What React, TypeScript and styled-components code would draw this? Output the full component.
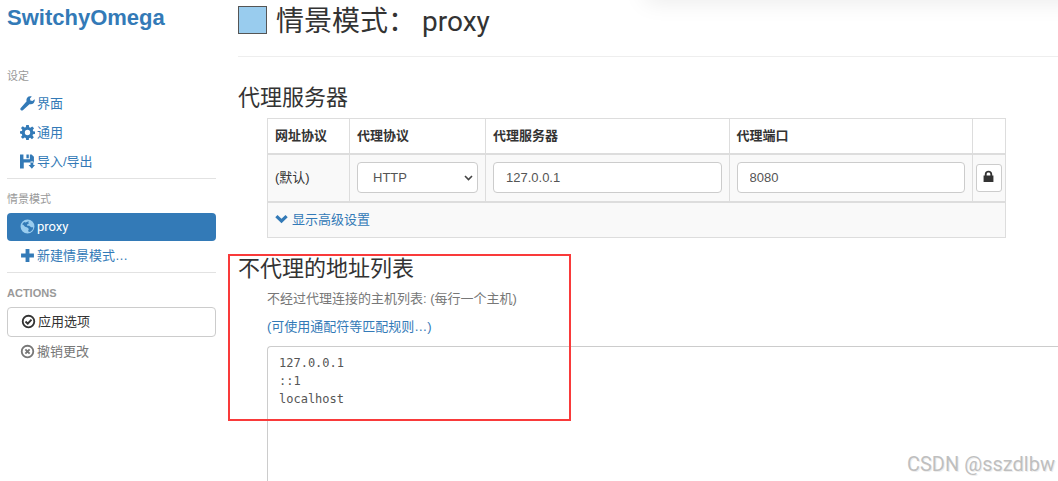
import React from "react";
import styled, { createGlobalStyle, css } from "styled-components";

const blue = "#337ab7";
const line = "#dddddd";

const GlobalStyle = createGlobalStyle`
  *, *::before, *::after { box-sizing: border-box; }
  body {
    margin: 0;
    background: #fff;
    color: #333;
    font: 13px/18px "Liberation Sans", "Noto Sans CJK SC", sans-serif;
  }
  a { color: ${blue}; text-decoration: none; }
  h1, h2, h3, p { margin: 0; font-weight: 400; }
  button, input, select, textarea { font: inherit; color: inherit; }
`;

const Page = styled.div`
  position: relative;
  display: grid;
  grid-template-columns: 209px minmax(0, 1fr);
  column-gap: 22px;
  height: 100vh;
  padding-left: 7px;
  overflow: hidden;
`;

const Sidebar = styled.nav`
  display: flex;
  flex-direction: column;
  padding-top: 4px;
`;

const Brand = styled.h1`
  margin-bottom: 36px;
  color: ${blue};
  font-size: 22px;
  font-weight: 700;
  line-height: 28px;
`;

const Group = styled.section`
  & + & {
    border-top: 1px solid #e2e2e2;
    margin-top: 1px;
    padding-top: 12px;
  }
`;

const GroupLabel = styled.h2<{ $bold?: boolean }>`
  margin-bottom: 6px;
  color: #999;
  font-size: 11px;
  font-weight: ${(p) => (p.$bold ? 700 : 400)};
  line-height: 16px;
`;

const itemBox = css`
  display: flex;
  align-items: center;
  gap: 2px;
  width: 100%;
  height: 28px;
  margin-bottom: 1px;
  padding: 0 14px 0 13px;
  border: 0;
  border-radius: 4px;
  background: none;
  text-align: left;
  svg { width: 15px; height: 15px; margin-bottom: 2px; }
`;

const NavItem = styled.a<{ $active?: boolean }>`
  ${itemBox}
  ${(p) =>
    p.$active &&
    css`
      background: ${blue};
      color: #fff;
      font-family: Roboto, "Noto Sans CJK SC", sans-serif;
      svg { color: #99ccee; }
    `}
`;

const ActionButton = styled.button<{ $outlined?: boolean }>`
  ${itemBox}
  color: ${(p) => (p.$outlined ? "#333" : "#777")};
  ${(p) =>
    p.$outlined &&
    css`
      height: 30px;
      border: 1px solid #ccc;
      background: #fff;
    `}
`;

const Icon = styled.svg`
  flex: none;
  width: 13px;
  height: 13px;
  fill: currentColor;
`;

const Main = styled.main`
  display: flex;
  flex-direction: column;
  min-width: 0;
`;

const Title = styled.header`
  display: flex;
  align-items: flex-start;
  gap: 9px;
  height: 57px;
  padding-top: 6px;
  border-bottom: 1px solid #eee;
  h2 {
    display: flex;
    gap: 6px;
    font: 400 28px/32px Roboto, "Noto Sans CJK SC", sans-serif;
  }
`;

const Swatch = styled.span`
  width: 29px;
  height: 28px;
  border: 1px solid #555;
  background: #99ccee;
`;

const SectionTitle = styled.h3`
  font-size: 22px;
  line-height: 30px;
`;

const ServerSection = styled.section`
  margin-bottom: 16px;
  padding-top: 26px;
`;

const Table = styled.table`
  width: calc(100% - 81px);
  margin: 5px 0 0 29px;
  border-collapse: collapse;
  table-layout: fixed;
  border: 1px solid ${line};
  th, td {
    padding: 0 7px;
    border: 1px solid ${line};
    text-align: left;
    vertical-align: middle;
  }
  th { height: 35px; border-bottom-width: 2px; font-weight: 700; }
  tbody td { height: 48px; background: #f9f9f9; }
  tfoot td { height: 36px; border-top-width: 2px; background: #f9f9f9; }
  td:last-child:not([colspan]) { padding: 0 3px; }
`;

const Col = styled.col<{ $w?: number }>`
  width: ${(p) => (p.$w ? `${p.$w}px` : "auto")};
`;

const field = css`
  display: block;
  width: 100%;
  height: 31px;
  padding: 0 12px;
  border: 1px solid #ccc;
  border-radius: 4px;
  background: #fff;
  color: #555;
  outline: 0;
`;

const TextField = styled.input`${field}`;

const SelectWrap = styled.div`
  display: grid;
  align-items: center;
  > * { grid-area: 1 / 1; }
  svg { justify-self: end; width: 9px; height: 9px; margin-right: 5px; pointer-events: none; }
`;

const Select = styled.select`
  ${field}
  padding-left: 15px;
  appearance: none;
`;

const LockButton = styled.button`
  display: flex;
  align-items: center;
  justify-content: center;
  width: 26px;
  height: 28px;
  padding: 0 2px 2px 0;
  border: 1px solid #ccc;
  border-radius: 3px;
  background: #fff;
`;

const MoreLink = styled.a`
  display: flex;
  align-items: center;
  gap: 4px;
`;

const BypassSection = styled.section`
  position: relative;
  display: flex;
  flex: 1;
  flex-direction: column;
`;

const Indented = styled.div`
  display: flex;
  flex: 1;
  flex-direction: column;
  padding: 6px 0 0 29px;
`;

const Help = styled.p`
  margin-bottom: 10px;
  color: #777;
`;

const HostList = styled.textarea`
  flex: 1;
  width: 100%;
  margin-top: 10px;
  padding: 7px 11px;
  border: solid #ccc;
  border-width: 1px 0 0 1px;
  border-radius: 4px 0 0 0;
  background: #fff;
  color: #555;
  font: 12px/18px "DejaVu Sans Mono", monospace;
  outline: 0;
  resize: none;
`;

const Highlight = styled.div`
  position: absolute;
  top: 0;
  left: -10px;
  width: 343px;
  height: 167px;
  border: 2px solid #f93a3a;
  pointer-events: none;
`;

const TopShade = styled.div`
  position: absolute;
  top: -20px;
  right: -20px;
  left: 646px;
  height: 20px;
  box-shadow: 0 0 24px rgba(0, 0, 0, 0.1);
`;

const Watermark = styled.span`
  position: absolute;
  right: 3px;
  bottom: 5px;
  color: #bfbfbf;
  font: 20px/24px Roboto, sans-serif;
  text-shadow: 1px 1px 0 #eee;
`;

const paths = {
  wrench:
    "M13.6 3 11.600 4.700 9.700 4.200 9.300 2.300 11 .5C9.400 0 7.800.3 6.900 1.300 6 2.300 5.800 3.600 6.200 4.900L.7 11.200a1.300 1.300 0 0 0 0 1.800l.2.2a1.300 1.300 0 0 0 1.800 0L8.800 7.600c1.400.4 2.800.1 3.800-.8 1-1 1.400-2.500 1-3.800Z",
  cog:
    "M5.800 0h2.400l.4 2 1.100.5L11.400 1.300l1.700 1.700-1.200 1.700.4 1.100 1.700.2v2.300l-1.900.4-.4 1.100 1.200 1.700-1.700 1.700-1.700-1.200-1.100.4L8.200 14H5.800l-.4-1.900-1.100-.4-1.700 1.200L.9 11.200l1.200-1.700-.4-1.100L0 8V5.800l1.800-.3.4-1.100L.9 2.900 2.600 1.200l1.700 1.200 1.100-.4ZM7 4.500a2.500 2.500 0 1 0 0 5 2.500 2.500 0 0 0 0-5Z",
  save:
    "M0 .5h3.200v4.500h6V.5h1.600L13 2.500v5.500H9V8H3.500v5.500H0ZM6 .5H8.200v3.500H6ZM9.800 7h2.600v3.300H14L11.100 13.800 8 10.300h1.800Z",
  plus: "M5.200 1h3.600v4.200H13v3.600H8.800V13H5.200V8.800H1V5.200h4.200Z",
  chevron: "M.3 4.500 2.700 2.100 7 6.300l4.300-4.200 2.400 2.400L7 11Z",
  lock:
    "M3 6V4.500C3 2.300 4.600.8 7 .8s4 1.500 4 3.700V6h1.300v7H1.700V6Zm2 0h4V4.500C9 3.300 8.200 2.600 7 2.600S5 3.300 5 4.500Z",
  globe:
    "M7 .5a6.500 6.500 0 1 0 0 13A6.500 6.500 0 0 0 7 .5ZM8.500 1.900 7.600 3.100l.9.800-1.700 1-.2 1.500 2-.2 1.800 1.400 1.700.2.2.8A5.300 5.300 0 0 1 8.200 12.200L7.600 10.800l.7-1.500-1.400-1.400-2.200-.6-1.700-2-1-.1A5.300 5.300 0 0 1 3.800 2.800l1.500.5Z",
};

const Glyph = ({ name }: { name: keyof typeof paths }) => (
  <Icon viewBox="0 0 14 14" aria-hidden="true">
    <path fillRule="evenodd" d={paths[name]} />
  </Icon>
);

const CircleGlyph = ({ mark }: { mark: string }) => (
  <Icon viewBox="0 0 14 14" aria-hidden="true">
    <circle cx="7" cy="7" r="5.400" fill="none" stroke="currentColor" strokeWidth="1.700" />
    <path d={mark} fill="none" stroke="currentColor" strokeWidth="1.800" />
  </Icon>
);

export default function App() {
  return (
    <>
      <GlobalStyle />
      <Page>
        <Sidebar>
          <Brand>SwitchyOmega</Brand>
          <Group>
            <GroupLabel>设定</GroupLabel>
            <NavItem href="#ui"><Glyph name="wrench" />界面</NavItem>
            <NavItem href="#general"><Glyph name="cog" />通用</NavItem>
            <NavItem href="#io"><Glyph name="save" />导入/导出</NavItem>
          </Group>
          <Group>
            <GroupLabel>情景模式</GroupLabel>
            <NavItem href="#proxy" $active><Glyph name="globe" />proxy</NavItem>
            <NavItem href="#new"><Glyph name="plus" />新建情景模式…</NavItem>
          </Group>
          <Group>
            <GroupLabel $bold>ACTIONS</GroupLabel>
            <ActionButton type="button" $outlined>
              <CircleGlyph mark="M4.200 7 6.300 9 9.800 5.300" />应用选项
            </ActionButton>
            <ActionButton type="button">
              <CircleGlyph mark="M5 5l4 4M9 5l-4 4" />撤销更改
            </ActionButton>
          </Group>
        </Sidebar>

        <Main>
          <Title>
            <Swatch />
            <h2><span>情景模式：</span><span>proxy</span></h2>
          </Title>

          <ServerSection>
            <SectionTitle>代理服务器</SectionTitle>
            <Table>
              <colgroup>
                <Col $w={82} />
                <Col $w={136} />
                <Col />
                <Col />
                <Col $w={33} />
              </colgroup>
              <thead>
                <tr>
                  <th>网址协议</th>
                  <th>代理协议</th>
                  <th>代理服务器</th>
                  <th>代理端口</th>
                  <th />
                </tr>
              </thead>
              <tbody>
                <tr>
                  <td>(默认)</td>
                  <td>
                    <SelectWrap>
                      <Select aria-label="代理协议" defaultValue="HTTP">
                        <option>HTTP</option>
                      </Select>
                      <Icon viewBox="0 0 9 9" aria-hidden="true">
                        <path d="M1 3l3.500 3.500L8 3" fill="none" stroke="#444" strokeWidth="1.600" />
                      </Icon>
                    </SelectWrap>
                  </td>
                  <td><TextField aria-label="代理服务器" defaultValue="127.0.0.1" /></td>
                  <td><TextField aria-label="代理端口" defaultValue="8080" /></td>
                  <td><LockButton type="button" aria-label="lock"><Glyph name="lock" /></LockButton></td>
                </tr>
              </tbody>
              <tfoot>
                <tr>
                  <td colSpan={5}>
                    <MoreLink href="#advanced"><Glyph name="chevron" />显示高级设置</MoreLink>
                  </td>
                </tr>
              </tfoot>
            </Table>
          </ServerSection>

          <BypassSection>
            <SectionTitle>不代理的地址列表</SectionTitle>
            <Indented>
              <Help>不经过代理连接的主机列表: (每行一个主机)</Help>
              <a href="#rules">(可使用通配符等匹配规则…)</a>
              <HostList aria-label="不代理的地址列表" spellCheck={false} defaultValue={"127.0.0.1\n::1\nlocalhost"} />
            </Indented>
            <Highlight />
          </BypassSection>
        </Main>
        <TopShade />
        <Watermark>CSDN @sszdlbw</Watermark>
      </Page>
    </>
  );
}
